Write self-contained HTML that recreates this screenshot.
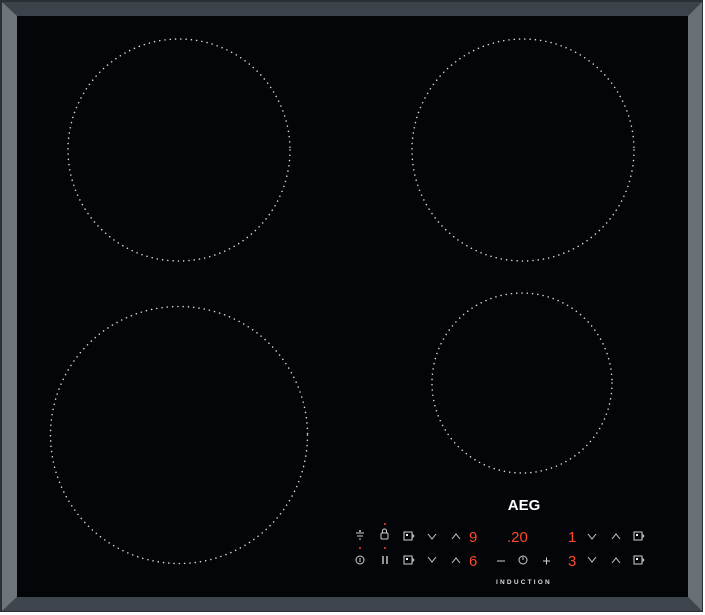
<!DOCTYPE html>
<html><head><meta charset="utf-8"><style>
html,body{margin:0;padding:0;background:#fff;width:705px;height:615px;overflow:hidden}
svg{display:block}
text{font-family:"Liberation Sans",sans-serif}
</style></head><body>
<svg width="705" height="615" viewBox="0 0 705 615" xmlns="http://www.w3.org/2000/svg">
<rect x="0" y="0" width="703" height="612" fill="#2b3035"/>
<!-- frame -->
<polygon points="2,2 702,2 688,16 17,16" fill="#3b4249"/>
<polygon points="2,2 17,16 17,597 2,611" fill="#6d747a"/>
<polygon points="702,2 702,611 688,597 688,16" fill="#687076"/>
<polygon points="2,611 17,597 688,597 702,611" fill="#3e454c"/>
<rect x="17" y="16" width="671" height="581" fill="#030508"/>
<g fill="none" stroke="#d8d8d8" stroke-width="1.6" stroke-linecap="round" stroke-dasharray="0 5.3">
<circle cx="179" cy="150" r="111"/>
<circle cx="523" cy="150" r="111"/>
<circle cx="179" cy="435" r="128.5"/>
<circle cx="522" cy="383" r="90"/>
</g>
<text x="524" y="510" font-size="15" font-weight="bold" fill="#fff" text-anchor="middle">AEG</text>
<text x="524" y="584" font-size="6.5" font-weight="bold" fill="#ddd" text-anchor="middle" letter-spacing="2.2">INDUCTION</text>
<g fill="none" stroke="#cfcfcf" stroke-width="1">
<!-- row1 -->
<path d="M356 533h8M357 536h6M359 539h2"/><circle cx="360" cy="531" r="0.5"/>
<rect x="381" y="533" width="7" height="6" rx="1"/><path d="M382.5 533v-2a2 2 0 0 1 4 0v2"/>
<rect x="404" y="532" width="8" height="8"/><path d="M412 534l2 2l-2 2"/>
<path d="M428 534l4 5l4 -5M452 539l4 -5l4 5"/>
<path d="M588 534l4 5l4 -5M612 539l4 -5l4 5"/>
<rect x="634" y="532" width="8" height="8"/><path d="M642 534l2 2l-2 2"/>
<!-- row2 -->
<circle cx="360" cy="560" r="4"/><path d="M360 558v4"/>
<path d="M383 556v8M387 556v8" stroke-width="1.4"/>
<rect x="404" y="556" width="8" height="8"/><path d="M412 558l2 2l-2 2"/>
<path d="M428 557l4 5l4 -5M452 563l4 -5l4 5"/>
<path d="M497 561h8"/><circle cx="523" cy="560" r="4"/><path d="M523 557v3"/><path d="M543 561h7M546.5 557.5v7"/>
<path d="M588 557l4 5l4 -5M612 563l4 -5l4 5"/>
<rect x="634" y="556" width="8" height="8"/><path d="M642 558l2 2l-2 2"/>
</g>
<g fill="#ff3a20"><circle cx="385" cy="524" r="1"/><circle cx="360" cy="548" r="1"/><circle cx="385" cy="548" r="1"/><circle cx="340" cy="0" r="0"/></g>
<g fill="#ff4a2a" stroke="none" font-size="15" font-family="Liberation Mono,monospace">
<text x="469" y="542">9</text>
<text x="469" y="566">6</text>
<text x="507" y="542">.20</text>
<text x="568" y="542">1</text>
<text x="568" y="566">3</text>
</g>
<g fill="#fff"><rect x="406" y="534" width="2" height="2"/><rect x="406" y="558" width="2" height="2"/><rect x="636" y="534" width="2" height="2"/><rect x="636" y="558" width="2" height="2"/></g>
</svg>
</body></html>
